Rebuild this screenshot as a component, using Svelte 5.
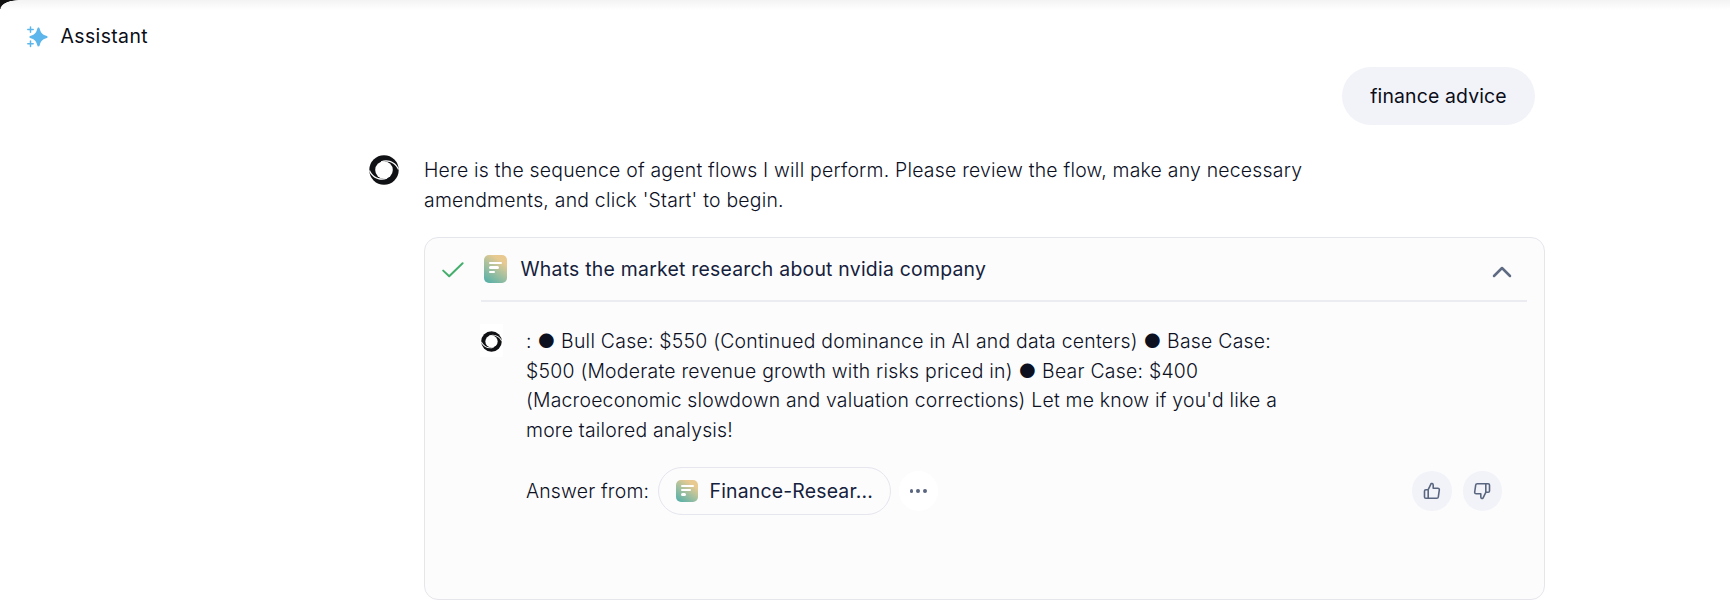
<script>
  const intro = [
    'Here is the sequence of agent flows I will perform. Please review the flow, make any necessary',
    "amendments, and click 'Start' to begin."
  ];
  const answer = [
    ': ● Bull Case: $550 (Continued dominance in AI and data centers) ● Base Case:',
    '$500 (Moderate revenue growth with risks priced in) ● Bear Case: $400',
    "(Macroeconomic slowdown and valuation corrections) Let me know if you'd like a",
    'more tailored analysis!'
  ];
</script>

{#snippet ring()}
  <svg viewBox="0 0 30 30" aria-hidden="true">
    <circle cx="15" cy="15" r="14.7" fill="#101114" />
    <circle cx="15" cy="15" r="8.8" fill="#fff" />
    <g fill="#fff">
      <path d="M12 6.2C19 3.6 26.4 6.6 29.8 13.6L29.2 15.2C26.4 8.4 19.6 4.8 12 7.2Z" />
      <path d="M18 23.8C11 26.4 3.6 23.4.2 16.4L.8 14.8C3.6 21.6 10.4 25.2 18 22.8Z" />
    </g>
  </svg>
{/snippet}

{#snippet thumb()}
  <svg class="thumb" viewBox="0 0 18 18" fill="none" stroke="#5a6680" stroke-width="1.6" stroke-linejoin="round" aria-hidden="true">
    <path d="M5.2 7.7 8 1.9C8.2 1.2 10.2 1.3 10.2 3.1V6.2H14.8C15.9 6.2 16.5 7 16.3 8L15.3 15C15.2 15.9 14.6 16.3 13.8 16.3H5.2Z" />
    <path d="M5.2 7.8H2.9C2 7.8 1.5 8.3 1.5 9.1V15C1.5 15.8 2 16.3 2.9 16.3H5.2" />
  </svg>
{/snippet}

<main>
  <div class="corner"></div>
  <header>
    <svg class="spark" viewBox="0 0 22 22" fill="#5cb6eb" aria-hidden="true">
      <path d="M11.5 1.6C12.2 1.6 12.4 2 12.7 2.8C14 7 15 8.4 19.2 9.8C20 10.1 20.6 10.4 20.6 11C20.6 11.6 20 11.9 19.2 12.2C15 13.6 14 15 12.7 19.2C12.4 20 12.2 20.4 11.5 20.4C10.8 20.4 10.6 20 10.3 19.2C9 15 8 13.6 3.8 12.2C3 11.9 2.4 11.6 2.4 11C2.4 10.4 3 10.1 3.8 9.8C8 8.4 9 7 10.3 2.8C10.6 2 10.8 1.6 11.5 1.6Z" />
      <path d="M3.5.9V6.3M.8 3.6H6.2M3.5 15V20.4M.8 17.7H6.2" stroke="#5cb6eb" stroke-width="1.5" stroke-linecap="round" />
    </svg>
    <h1>Assistant</h1>
  </header>

  <section class="chat">
    <div class="user">finance advice</div>

    <div class="reply">
      <div class="avatar">{@render ring()}</div>
      <div class="body">
        <p class="copy">{#each intro as line}<span>{line}</span>{/each}</p>

        <article>
          <div class="top">
            <svg class="check" viewBox="0 0 22 16" fill="none" stroke="#45ae6c" stroke-width="2" stroke-linecap="round" stroke-linejoin="round" aria-hidden="true"><path d="M1.2 8.6 7.2 14.3 20.6 1.2" /></svg>
            <div class="title">
              <div class="doc tall"><i></i><i></i><i></i></div>
              <h2>Whats the market research about nvidia company</h2>
              <svg class="chev" viewBox="0 0 20 12" fill="none" stroke="#5f6b82" stroke-width="2.5" stroke-linecap="round" stroke-linejoin="round" aria-hidden="true"><path d="M2 10 10 2 18 10" /></svg>
            </div>
          </div>

          <div class="result">
            <div class="mini">{@render ring()}</div>
            <div class="content">
              <p class="copy">{#each answer as line}<span>{line}</span>{/each}</p>
              <div class="foot">
                <span class="from">Answer from:</span>
                <div class="pill">
                  <div class="doc"><i></i><i></i><i></i></div>
                  <span>Finance-Resear...</span>
                </div>
                <button class="more" aria-label="More"><b></b><b></b><b></b></button>
                <div class="votes">
                  <button aria-label="Helpful">{@render thumb()}</button>
                  <button class="down" aria-label="Not helpful">{@render thumb()}</button>
                </div>
              </div>
            </div>
          </div>
        </article>
      </div>
    </div>
  </section>
</main>

<style>
  :global(body) { background: #fff; }
  * { box-sizing: border-box; margin: 0; }
  main {
    position: relative;
    height: 610px;
    overflow: hidden;
    font-family: Inter, sans-serif;
    font-size: 19.4px;
    letter-spacing: 0.24px;
    color: #0b0d18;
    background: linear-gradient(#f3f3f3, #fff 10px);
  }
  .corner {
    position: absolute;
    left: 0;
    top: 0;
    width: 18px;
    height: 9px;
    background: radial-gradient(ellipse 18px 9px at 100% 100%, transparent 94%, #111 100%);
  }
  svg { display: block; flex: none; }
  header { display: flex; align-items: center; height: 67px; padding: 6px 0 0 27px; }
  .spark { width: 22px; height: 22px; }
  h1 { font-size: inherit; font-weight: 400; margin: -1px 0 0 11.5px; letter-spacing: 0.4px; }
  .chat { width: 1176px; margin-left: 369px; }
  .user {
    width: 193px;
    height: 58px;
    margin-left: 973px;
    border-radius: 29px;
    background: #f2f3f8;
    line-height: 58px;
    text-align: center;
    letter-spacing: 0.15px;
  }
  .reply { display: flex; margin-top: 29.5px; }
  .avatar { width: 30px; height: 30px; margin-right: 25px; }
  .avatar svg { width: 30px; height: 30px; }
  .body { width: 1121px; }
  .body > .copy { padding-top: 1.5px; }
  .copy { font-weight: 300; line-height: 29.5px; letter-spacing: 0.23px; color: #0c101f; white-space: nowrap; }
  .copy span { display: block; }
  article {
    width: 1121px;
    height: 363px;
    margin-top: 21.5px;
    padding: 0 17px 0 17px;
    border: 1px solid #e5e6ec;
    border-radius: 14px;
    background: #fcfcfd;
  }
  .top { display: flex; align-items: center; }
  .check { width: 22px; height: 16px; margin: 1px 17px 0 0; }
  .title {
    flex: 1;
    display: flex;
    align-items: center;
    height: 64px;
    padding: 1px 15px 0 3px;
    border-bottom: 2px solid #ebecf1;
  }
  h2 { flex: 1; margin-left: 14px; font-size: inherit; font-weight: 400; letter-spacing: 0.24px; color: #15213c; }
  .chev { width: 20px; height: 12px; margin-top: 5px; }
  .doc {
    width: 22.5px;
    height: 22.5px;
    padding: 5px 0 0 5px;
    border-radius: 5px;
    background: linear-gradient(35deg, #56b0a8 5%, #a3c09f 45%, #e8ca91 78%);
  }
  .doc i { display: block; width: 13px; height: 2.3px; margin-bottom: 2px; border-radius: 2px; background: #fff; }
  .doc i:nth-child(2) { width: 10px; }
  .doc i:nth-child(3) { width: 5.5px; }
  .doc.tall { height: 28px; padding-top: 6.5px; }
  .tall i { margin-bottom: 2.5px; }
  .result { display: flex; padding: 25.5px 0 0 38px; }
  .mini {
    width: 23px;
    height: 33px;
    margin: -3px 23px 0 0;
    padding: 7px 1px 0;
    background: #fff;
  }
  .mini svg { width: 21px; height: 21px; }
  .content { flex: 1; }
  .content .copy { letter-spacing: 0.25px; }
  .content .copy span:nth-child(n + 3) { letter-spacing: 0.22px; }
  .foot { display: flex; align-items: center; height: 48px; margin-top: 22px; }
  .from { width: 132px; font-weight: 300; letter-spacing: 0.2px; color: #0c101f; }
  .pill {
    display: flex;
    align-items: center;
    width: 232.5px;
    height: 48px;
    padding-left: 16.5px;
    border: 1px solid #e5e6ee;
    border-radius: 24px;
    color: #15213c;
  }
  .pill span { margin-left: 11.5px; letter-spacing: 0.2px; }
  button {
    display: flex;
    align-items: center;
    justify-content: center;
    width: 39.5px;
    height: 39.5px;
    padding: 0;
    border: 0;
    border-radius: 50%;
    background: #f2f3f8;
  }
  .more { gap: 3px; margin-left: 8px; background: #fff; }
  .more b { width: 3.8px; height: 3.8px; border-radius: 50%; background: #5a6680; }
  .votes { display: flex; gap: 11px; margin-left: auto; padding-right: 25px; }
  .thumb { width: 18px; height: 18px; }
  .down .thumb { transform: rotate(180deg); }
</style>
